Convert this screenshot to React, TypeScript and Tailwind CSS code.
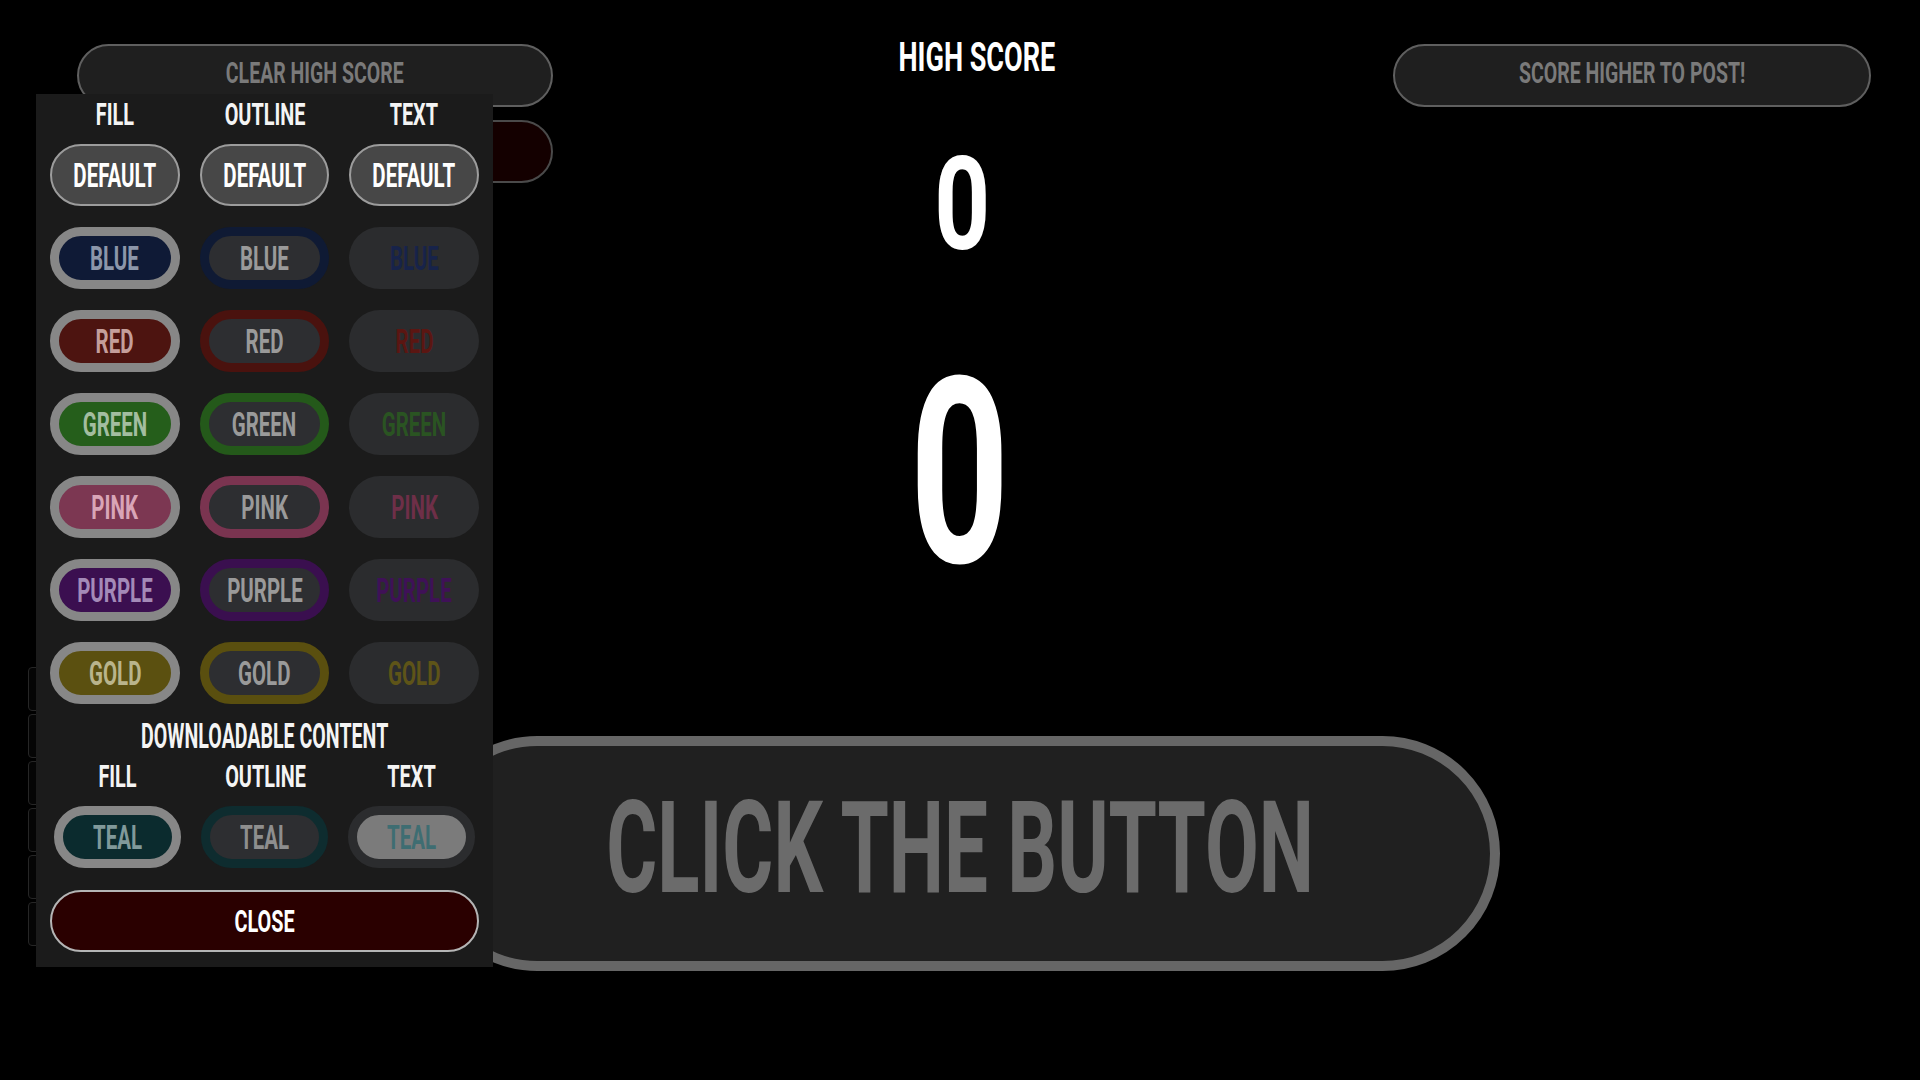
import React from 'react';

const FONT = "font-['Liberation_Sans_Narrow','Roboto',sans-serif] font-bold uppercase";

const COLOURS = [
  {
    name: 'Blue',
    fill: 'border-[9px] border-[#878787] bg-[#0f1a36] text-[#8c96aa]',
    outline: 'border-[9px] border-[#0f1a34] bg-[#2d2e31] text-[#9a9a9a]',
    text: 'bg-[#2b2c2e] text-[#17234a]',
  },
  {
    name: 'Red',
    fill: 'border-[9px] border-[#878787] bg-[#4d1410] text-[#c49e9b]',
    outline: 'border-[9px] border-[#4a120e] bg-[#2d2e31] text-[#9a9a9a]',
    text: 'bg-[#2b2c2e] text-[#5b1612]',
  },
  {
    name: 'Green',
    fill: 'border-[9px] border-[#878787] bg-[#255e1b] text-[#a3bda0]',
    outline: 'border-[9px] border-[#24591a] bg-[#2d2e31] text-[#9a9a9a]',
    text: 'bg-[#2b2c2e] text-[#2a5422]',
  },
  {
    name: 'Pink',
    fill: 'border-[9px] border-[#878787] bg-[#7c3752] text-[#d9a5b7]',
    outline: 'border-[9px] border-[#7a3450] bg-[#2d2e31] text-[#9a9a9a]',
    text: 'bg-[#2b2c2e] text-[#6e2f48]',
  },
  {
    name: 'Purple',
    fill: 'border-[9px] border-[#878787] bg-[#3b0f50] text-[#a48ab8]',
    outline: 'border-[9px] border-[#3a0f4f] bg-[#2d2e31] text-[#9a9a9a]',
    text: 'bg-[#2b2c2e] text-[#3f1157]',
  },
  {
    name: 'Gold',
    fill: 'border-[9px] border-[#878787] bg-[#5b5010] text-[#b9b48c]',
    outline: 'border-[9px] border-[#5a4f0f] bg-[#2d2e31] text-[#9a9a9a]',
    text: 'bg-[#2b2c2e] text-[#5e5418]',
  },
];

function Txt({ children, className = 'scale-x-[0.62]' }: { children: React.ReactNode; className?: string }) {
  return <span className={`inline-block whitespace-nowrap leading-none ${className}`}>{children}</span>;
}

function Pill({ className, children }: { className: string; children: React.ReactNode }) {
  return (
    <div className={`flex h-[62px] items-center justify-center rounded-full text-[33px] ${className}`}>
      <Txt>{children}</Txt>
    </div>
  );
}

function Labels() {
  return (
    <div className="grid h-[36px] grid-cols-3 items-center gap-x-[20px] text-center text-[32px] text-[#f4f4f4]">
      <Txt>Fill</Txt>
      <Txt>Outline</Txt>
      <Txt>Text</Txt>
    </div>
  );
}

function ColourPanel() {
  return (
    <div className={`absolute left-[36px] top-[94px] z-10 flex h-[873px] w-[457px] flex-col bg-[#1b1b1b] px-[14px] ${FONT}`}>
      <div className="mt-[2px]">
        <Labels />
      </div>

      <div className="mt-[12px] flex flex-col gap-y-[21px]">
        <div className="grid grid-cols-3 gap-x-[20px]">
          <Pill className="border-2 border-[#9c9c9c] bg-[#474747] text-white">Default</Pill>
          <Pill className="border-2 border-[#9c9c9c] bg-[#474747] text-white">Default</Pill>
          <Pill className="border-2 border-[#9c9c9c] bg-[#474747] text-white">Default</Pill>
        </div>
        {COLOURS.map((c) => (
          <div key={c.name} className="grid grid-cols-3 gap-x-[20px]">
            <Pill className={c.fill}>{c.name}</Pill>
            <Pill className={c.outline}>{c.name}</Pill>
            <Pill className={c.text}>{c.name}</Pill>
          </div>
        ))}
      </div>

      <div className="mt-[14px] flex h-[36px] items-center justify-center text-[35px] text-[#f4f4f4]">
        <Txt className="scale-x-[0.56]">Downloadable Content</Txt>
      </div>
      <div className="mt-[4px] px-[4px]">
        <Labels />
      </div>

      <div className="mt-[12px] grid grid-cols-3 gap-x-[20px] px-[4px]">
        <Pill className="border-[9px] border-[#878787] bg-[#0b2b2e] text-[#80999a]">Teal</Pill>
        <Pill className="border-[9px] border-[#0e2c2f] bg-[#2d2e31] text-[#8e8e8e]">Teal</Pill>
        <Pill className="border-[9px] border-[#2b2c2e] bg-[#7b7b7b] text-[#3e6d72]">Teal</Pill>
      </div>

      <button className="mt-[22px] flex h-[62px] w-full items-center justify-center rounded-full border-2 border-[#b5b5b5] bg-[#2a0000] text-[32px] uppercase text-white">
        <Txt>Close</Txt>
      </button>
    </div>
  );
}

export default function App() {
  return (
    <div className={`relative h-[1080px] w-full overflow-hidden bg-black ${FONT}`}>
      {/* stacked tabs peeking out from under the panel */}
      <div className="absolute left-[28px] top-[667px] flex flex-col gap-y-[3px]">
        {[0, 1, 2, 3, 4, 5].map((i) => (
          <div key={i} className="h-[44px] w-[40px] rounded-l-[4px] border border-[#262626] bg-[#050505]" />
        ))}
      </div>

      <div className="flex items-start pl-[77px] pr-[49px] pt-[44px]">
        <div className="flex w-[476px] flex-col gap-y-[13px]">
          <button className="flex h-[63px] items-center justify-center rounded-full border-2 border-[#5f5f5f] bg-[#1f1f1f] pb-[5px] text-[30px] uppercase text-[#7a7a7a]">
            <Txt className="scale-x-[0.65]">Clear High Score</Txt>
          </button>
          <button className="h-[63px] rounded-full border-2 border-[#4a4a4a] bg-[#140000]" />
        </div>

        <div className="flex flex-1 flex-col items-center text-white">
          <div className="ml-[8px] mt-[-7px] flex text-[41px] leading-none">
            <Txt className="scale-x-[0.66]">High Score</Txt>
          </div>
          <div className="mr-[22px] mt-[62px] flex text-[130px] leading-none">
            <Txt className="scale-x-[0.75]">0</Txt>
          </div>
        </div>

        <button className="flex h-[63px] w-[478px] items-center justify-center rounded-full border-2 border-[#5f5f5f] bg-[#1f1f1f] pb-[5px] text-[30px] uppercase text-[#7a7a7a]">
          <Txt className="scale-x-[0.65]">Score Higher To Post!</Txt>
        </button>
      </div>

      <div className="mt-[73px] flex justify-center text-[260px] leading-none text-white">
        <Txt className="scale-x-[0.67]">0</Txt>
      </div>

      <div className="mx-auto mt-[133px] flex h-[235px] w-[1080px] items-center justify-center rounded-full border-[10px] border-[#666666] bg-[#202020] pb-[12px] text-[128px] text-[#6b6b6b]">
        <Txt className="scale-x-[0.61]">Click The Button</Txt>
      </div>

      <ColourPanel />
    </div>
  );
}
